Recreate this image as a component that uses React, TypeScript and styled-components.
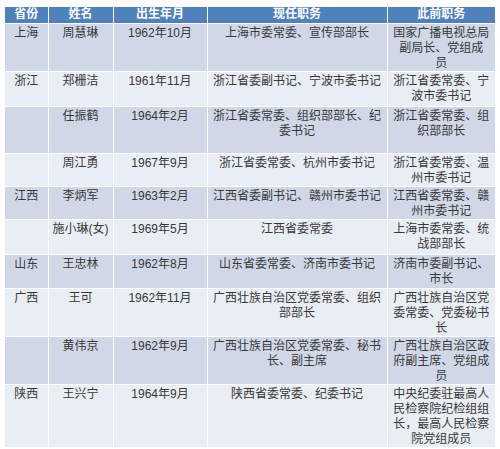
import React from 'react';
import styled, { createGlobalStyle } from 'styled-components';

type Tone = 'dark' | 'light';

interface Official {
	province?: string;
	name: string;
	born: string;
	current: string[];
	previous: string[];
	height: number;
}

const officials: Official[] = [
	{ province: '上海', name: '周慧琳', born: '1962年10月', current: ['上海市委常委、宣传部部长'], previous: ['国家广播电视总局', '副局长、党组成', '员'], height: 48 },
	{ province: '浙江', name: '郑栅洁', born: '1961年11月', current: ['浙江省委副书记、宁波市委书记'], previous: ['浙江省委常委、宁', '波市委书记'], height: 35 },
	{ name: '任振鹤', born: '1964年2月', current: ['浙江省委常委、组织部部长、纪', '委书记'], previous: ['浙江省委常委、组', '织部部长'], height: 47 },
	{ name: '周江勇', born: '1967年9月', current: ['浙江省委常委、杭州市委书记'], previous: ['浙江省委常委、温', '州市委书记'], height: 32 },
	{ province: '江西', name: '李炳军', born: '1963年2月', current: ['江西省委副书记、赣州市委书记'], previous: ['江西省委常委、赣', '州市委书记'], height: 33 },
	{ name: '施小琳(女)', born: '1969年5月', current: ['江西省委常委'], previous: ['上海市委常委、统', '战部部长'], height: 35 },
	{ province: '山东', name: '王忠林', born: '1962年8月', current: ['山东省委常委、济南市委书记'], previous: ['济南市委副书记、', '市长'], height: 34 },
	{ province: '广西', name: '王可', born: '1962年11月', current: ['广西壮族自治区党委常委、组织', '部部长'], previous: ['广西壮族自治区党', '委常委、党委秘书', '长'], height: 48 },
	{ name: '黄伟京', born: '1962年9月', current: ['广西壮族自治区党委常委、秘书', '长、副主席'], previous: ['广西壮族自治区政', '府副主席、党组成', '员'], height: 47 },
	{ province: '陕西', name: '王兴宁', born: '1964年9月', current: ['陕西省委常委、纪委书记'], previous: ['中央纪委驻最高人', '民检察院纪检组组', '长，最高人民检察', '院党组成员'], height: 60 },
];

const GlobalStyle = createGlobalStyle`
  html, body {
    margin: 0;
    background: #ffffff;
  }
  body {
    font-family: "Liberation Sans", "Noto Sans CJK SC", sans-serif;
  }
`;

const Page = styled.div`
	padding: 7px 5px;
`;

const Table = styled.table`
	width: 490px;
	table-layout: fixed;
	border-collapse: collapse;
	font-size: 12px;
	line-height: 15px;
	color: #383838;
`;

const HeadRow = styled.tr`
	height: 16px;
	background: #4f81bd;
`;

const HeadCell = styled.th`
	padding: 0;
	border-left: 1px solid #ffffff;
	border-right: 1px solid #ffffff;
	color: #ffffff;
	font-weight: bold;
	text-align: center;
	vertical-align: middle;

	&:first-child {
		border-left: none;
	}
	&:last-child {
		border-right: none;
	}
`;

const Row = styled.tr<{ $tone: Tone }>`
	background: ${({ $tone }) => ($tone === 'dark' ? '#d0d8e8' : '#e9edf4')};
`;

const Cell = styled.td`
	padding: 2px 3px 0;
	border: 1px solid #ffffff;
	text-align: center;
	vertical-align: top;
	white-space: nowrap;
	overflow: hidden;

	&:first-child {
		border-left: none;
	}
	&:last-child {
		border-right: none;
	}
`;

const Line = styled.div`
	display: block;
`;

const columns = [43, 65, 94, 180, 108];
const headers = ['省份', '姓名', '出生年月', '现任职务', '此前职务'];

const App = () => {
	return (
		<Page>
			<GlobalStyle />
			<Table>
				<colgroup>
					{columns.map((w, i) => (
						<col key={i} style={{ width: w }} />
					))}
				</colgroup>
				<thead>
					<HeadRow>
						{headers.map((h) => (
							<HeadCell key={h}>{h}</HeadCell>
						))}
					</HeadRow>
				</thead>
				<tbody>
					{officials.map((o, i) => (
						<Row key={o.name} $tone={i % 2 === 0 ? 'dark' : 'light'} style={{ height: o.height }}>
							<Cell>{o.province}</Cell>
							<Cell>{o.name}</Cell>
							<Cell>{o.born}</Cell>
							<Cell>
								{o.current.map((l) => (
									<Line key={l}>{l}</Line>
								))}
							</Cell>
							<Cell>
								{o.previous.map((l) => (
									<Line key={l}>{l}</Line>
								))}
							</Cell>
						</Row>
					))}
				</tbody>
			</Table>
		</Page>
	);
};

export default App;
